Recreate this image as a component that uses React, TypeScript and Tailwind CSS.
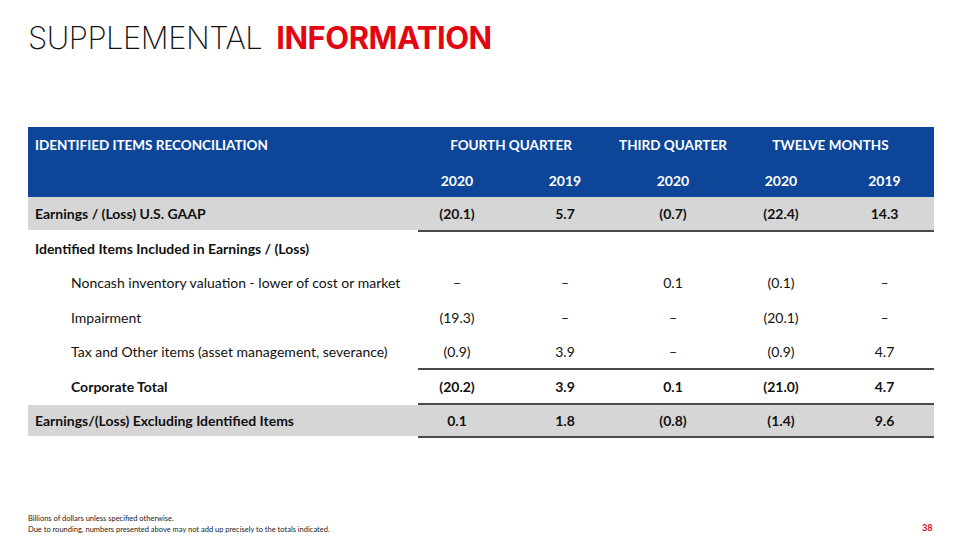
const rows = [
  { label: 'Noncash inventory valuation - lower of cost or market', v: ['–', '–', '0.1', '(0.1)', '–'], h: 'h-[35px]' },
  { label: 'Impairment', v: ['(19.3)', '–', '–', '(20.1)', '–'], h: 'h-[35px]' },
  { label: 'Tax and Other items (asset management, severance)', v: ['(0.9)', '3.9', '–', '(0.9)', '4.7'], h: 'h-[33px]' },
]

const colW = ['w-[108px]', 'w-[108px]', 'w-[108px]', 'w-[108px]', 'w-[99px]']

function Values({ v, bold }: { v: string[]; bold?: boolean }) {
  return (
    <div className="flex">
      {v.map((x, i) => (
        <div key={i} className={`${colW[i]} text-center ${bold ? 'font-bold' : ''}`}>{x}</div>
      ))}
    </div>
  )
}

function Rule() {
  return <div className="ml-[390px] h-[2px] bg-[#4a4a4a]" />
}

export default function App() {
  return (
    <div className="w-[960px] h-[540px] bg-white relative overflow-hidden" style={{ fontFamily: 'Lato, "Open Sans", sans-serif' }}>
      <h1 className="absolute left-[28px] top-[22px] text-[31px] leading-none tracking-[-0.5px] text-[#111] whitespace-nowrap" style={{ fontFamily: 'Inter, sans-serif' }}>
        <span className="font-extralight">SUPPLEMENTAL</span>
        <span className="font-bold text-[#e30613] ml-[14px]">INFORMATION</span>
      </h1>

      <div className="absolute left-[28px] top-[127px] w-[906px] text-[14px] text-[#111] whitespace-nowrap">
        <div className="bg-[#0d4699] text-white font-bold h-[70px] flex flex-col text-[13.5px]">
          <div className="flex h-[36px] items-center">
            <div className="w-[375px] pl-[7px]">IDENTIFIED ITEMS RECONCILIATION</div>
            <div className="w-[216px] text-center">FOURTH QUARTER</div>
            <div className="w-[108px] text-center">THIRD QUARTER</div>
            <div className="w-[207px] text-center">TWELVE MONTHS</div>
          </div>
          <div className="flex h-[34px] items-center text-[14px]">
            <div className="w-[375px]" />
            <Values v={['2020', '2019', '2020', '2020', '2019']} />
          </div>
        </div>

        <div className="flex h-[33px] items-center bg-[#d6d6d6] font-bold">
          <div className="w-[375px] pl-[7px]">Earnings / (Loss) U.S. GAAP</div>
          <Values v={['(20.1)', '5.7', '(0.7)', '(22.4)', '14.3']} />
        </div>
        <Rule />

        <div className="flex h-[33px] items-center font-bold">
          <div className="w-[375px] pl-[7px]">Identified Items Included in Earnings / (Loss)</div>
        </div>

        {rows.map((r) => (
          <div key={r.label} className={`flex ${r.h} items-center`}>
            <div className="w-[375px] pl-[43px]">{r.label}</div>
            <Values v={r.v} />
          </div>
        ))}

        <Rule />
        <div className="flex h-[33px] items-center font-bold">
          <div className="w-[375px] pl-[43px]">Corporate Total</div>
          <Values v={['(20.2)', '3.9', '0.1', '(21.0)', '4.7']} bold />
        </div>
        <Rule />
        <div className="flex h-[31px] items-center bg-[#d6d6d6] font-bold">
          <div className="w-[375px] pl-[7px]">Earnings/(Loss) Excluding Identified Items</div>
          <Values v={['0.1', '1.8', '(0.8)', '(1.4)', '9.6']} bold />
        </div>
        <Rule />
      </div>

      <div className="absolute left-[28px] top-[513px] text-[7.5px] leading-[11px] text-[#222]">
        <div>Billions of dollars unless specified otherwise.</div>
        <div>Due to rounding, numbers presented above may not add up precisely to the totals indicated.</div>
      </div>
      <div className="absolute left-[922px] top-[521px] text-[9px] font-bold text-[#e30613]">38</div>
    </div>
  )
}
